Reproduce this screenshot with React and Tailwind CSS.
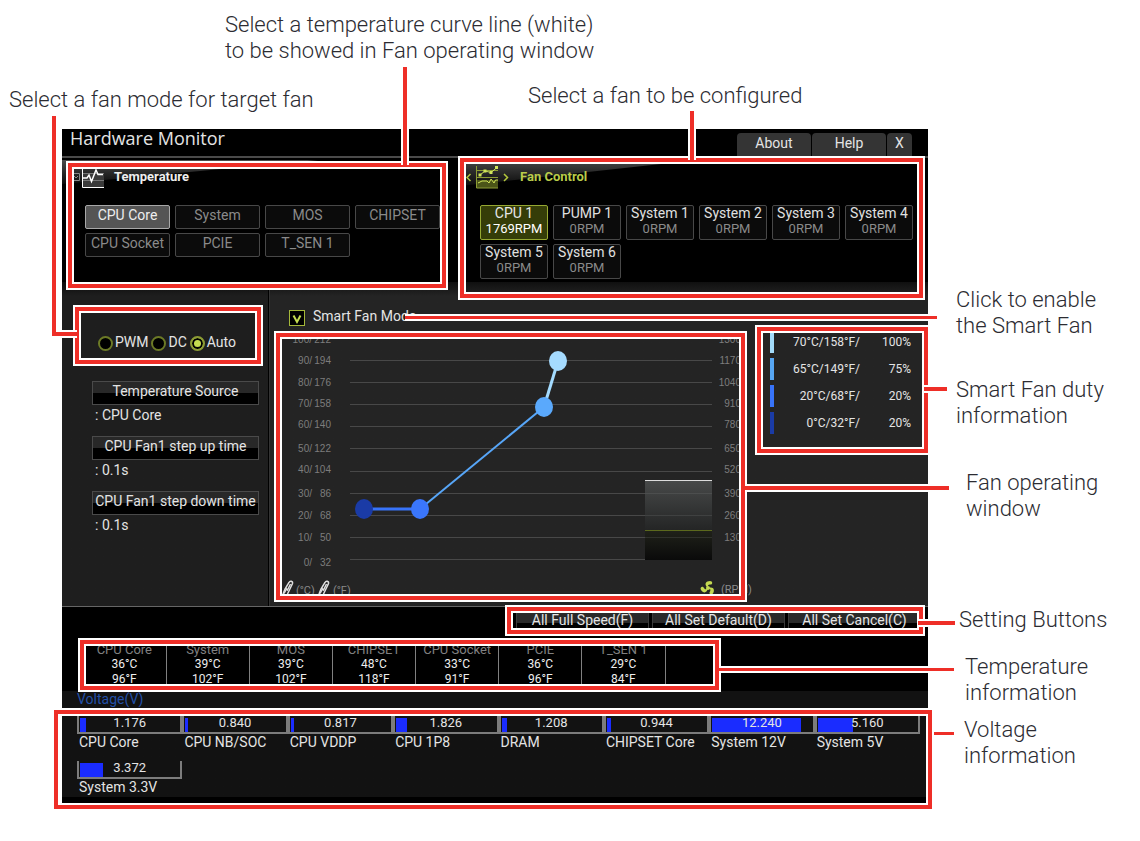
import { useState } from 'react';

const SENSORS = ['CPU Core', 'System', 'MOS', 'CHIPSET', 'CPU Socket', 'PCIE', 'T_SEN 1'];

const FANS = [
  { name: 'CPU 1', rpm: 1769 },
  { name: 'PUMP 1', rpm: 0 },
  { name: 'System 1', rpm: 0 },
  { name: 'System 2', rpm: 0 },
  { name: 'System 3', rpm: 0 },
  { name: 'System 4', rpm: 0 },
  { name: 'System 5', rpm: 0 },
  { name: 'System 6', rpm: 0 },
];

const FAN_OPTIONS = [
  { label: 'Temperature Source', value: 'CPU Core' },
  { label: 'CPU Fan1 step up time', value: '0.1s' },
  { label: 'CPU Fan1 step down time', value: '0.1s' },
];

const DUTY = [
  { temp: '70°C/158°F/', duty: '100%', bar: 'bg-[#a3dbfa]' },
  { temp: '65°C/149°F/', duty: '75%', bar: 'bg-[#57a6f2]' },
  { temp: '20°C/68°F/', duty: '20%', bar: 'bg-[#3874fa]' },
  { temp: '0°C/32°F/', duty: '20%', bar: 'bg-[#1a3ba6]' },
];

const TEMPS = [
  { name: 'CPU Core', c: 36, f: 96 },
  { name: 'System', c: 39, f: 102 },
  { name: 'MOS', c: 39, f: 102 },
  { name: 'CHIPSET', c: 48, f: 118 },
  { name: 'CPU Socket', c: 33, f: 91 },
  { name: 'PCIE', c: 36, f: 96 },
  { name: 'T_SEN 1', c: 29, f: 84 },
];

const VOLTAGES = [
  { name: 'CPU Core', value: '1.176', fill: 6 },
  { name: 'CPU NB/SOC', value: '0.840', fill: 3 },
  { name: 'CPU VDDP', value: '0.817', fill: 3 },
  { name: 'CPU 1P8', value: '1.826', fill: 11 },
  { name: 'DRAM', value: '1.208', fill: 5 },
  { name: 'CHIPSET Core', value: '0.944', fill: 4 },
  { name: 'System 12V', value: '12.240', fill: 88 },
  { name: 'System 5V', value: '5.160', fill: 35 },
  { name: 'System 3.3V', value: '3.372', fill: 23 },
];

// y is the label centre inside the chart
const AXIS = [
  { c: '100/', f: '212', rpm: '1300', y: 6 },
  { c: '90/', f: '194', rpm: '1170', y: 27 },
  { c: '80/', f: '176', rpm: '1040', y: 49 },
  { c: '70/', f: '158', rpm: '910', y: 70 },
  { c: '60/', f: '140', rpm: '780', y: 91 },
  { c: '50/', f: '122', rpm: '650', y: 115 },
  { c: '40/', f: '104', rpm: '520', y: 136 },
  { c: '30/', f: '86', rpm: '390', y: 160 },
  { c: '20/', f: '68', rpm: '260', y: 182 },
  { c: '10/', f: '50', rpm: '130', y: 204 },
  { c: '0/', f: '32', rpm: '', y: 229 },
];

const GRID_LINES = [27, 49, 71, 93, 115, 138, 160, 182, 204, 226];

const Frame = () => (
  <span aria-hidden="true" className="pointer-events-none absolute inset-0 border-4 border-[#ee2e27] shadow-[0_0_0_2px_#fff,inset_0_0_0_2px_#fff]" />
);

const Leader = ({ className }) => (
  <span aria-hidden="true" className={`pointer-events-none absolute z-20 bg-[#ee2e27] ${className}`} />
);

const Note = ({ className = '', children }) => (
  <p className={`text-[22px] leading-[26px] font-light whitespace-nowrap text-[#2c2c32] ${className}`}>{children}</p>
);

const TemperatureIcon = () => (
  <svg width="32" height="20" viewBox="0 0 32 20" fill="none" aria-hidden="true">
    <path d="M0.5 5.5h7v7h-7zM2 8l2 2 2-2" stroke="#888" />
    <path d="M11 5h21v14H11z" fill="#3a3a3a" />
    <path d="M11 5.5h21M11 12.5h21" stroke="#777" />
    <path d="M10.5 0v19.5H32" stroke="#fff" />
    <path d="M11 10h4l2-3 2.5 6.5L24 2l2 4.5h5" stroke="#fff" strokeWidth="1.5" />
  </svg>
);

const FanControlIcon = () => (
  <svg width="43" height="24" viewBox="0 0 43 24" fill="none" aria-hidden="true">
    <path d="M4.5 9L1 12.5 4.5 16M38 9l3.5 3.5L38 16" stroke="#b4c83c" strokeWidth="1.5" />
    <path d="M11 15h21v8H11z" fill="#4b5518" />
    <path d="M10.5 1v22H32M11 5.5h21M11 12.5h21" stroke="#8c9c34" />
    <path d="M14 10l5-4 6 1.5 6-5" stroke="#cfe45a" />
    <path d="M12.500 8.5h3v3h-3zM17.5 4.500h3v3h-3zM23.5 6h3v3h-3zM29 1h3v3h-3z" fill="#cfe45a" />
    <path d="M12 18l4-2h5l2 2 2-4 3 4 1.5-3H32" stroke="#cfe45a" />
  </svg>
);

const TopBar = () => (
  <header className="flex h-[29px] items-start justify-between border-b-2 border-[#4a4a4a] bg-black">
    <h1 className="pl-2 font-['Open_Sans',sans-serif] text-[18px] leading-[18px] text-[#e4e4e4]">Hardware Monitor</h1>
    <nav className="flex gap-px pt-1 pr-4 text-sm text-[#e4e4e4]">
      <button className="h-[23px] w-[74px] rounded-t bg-[#343434] pb-1 leading-4">About</button>
      <button className="h-[23px] w-[74px] rounded-t bg-[#343434] pb-1 leading-4">Help</button>
      <button className="h-[23px] w-[25px] rounded-t bg-[#343434] pb-1 leading-4">X</button>
    </nav>
  </header>
);

const TemperaturePanel = () => {
  const [active, setActive] = useState('CPU Core');
  return (
    <section className="relative mt-[5px] h-[125px] flex-[378_1_0%]">
      <div className="absolute -top-[3px] -left-[6px] h-6 w-64 bg-linear-to-b from-[#4c4c4c] to-[#0c0c0c] [clip-path:polygon(0_0,100%_0,0_100%)]" />
      <div className="relative flex h-[42px] items-start gap-[10px] pt-[5px] pl-1">
        <TemperatureIcon />
        <h2 className="text-[13px] leading-[18px] font-bold text-[#eee]">Temperature</h2>
      </div>
      <div className="relative flex flex-wrap gap-x-[5px] gap-y-1 pl-[17px]">
        {SENSORS.map((name) => (
          <button
            key={name}
            onClick={() => setActive(name)}
            className={`h-6 w-[85px] rounded-xs border pb-1 text-sm leading-4 whitespace-nowrap ${
              active === name ? 'border-[#a8a8a8] bg-[#555] text-[#eee]' : 'border-[#484848] bg-[#0b0b0b] text-[#8a8a8a]'
            }`}
          >
            {name}
          </button>
        ))}
      </div>
      <Frame />
      <Leader className="-top-24 left-[335px] h-[98px] w-1 shadow-[2px_0_0_#fff,-2px_0_0_#fff]" />
    </section>
  );
};

const FanPanel = () => {
  const [active, setActive] = useState('CPU 1');
  return (
    <section className="relative h-[140px] flex-[463_1_0%]">
      <div className="absolute top-0 left-0 h-7 w-64 bg-linear-to-b from-[#4c4c4c] to-[#0c0c0c] [clip-path:polygon(0_0,100%_0,0_100%)]" />
      <div className="relative flex h-[47px] items-start gap-[11px] pt-[7px] pl-[6px]">
        <FanControlIcon />
        <h2 className="text-[13px] leading-6 font-bold text-[#b9cc4a]">Fan Control</h2>
      </div>
      <div className="relative flex flex-wrap gap-x-[5px] gap-y-1 pl-5">
        {FANS.map((fan) => {
          const on = active === fan.name;
          return (
            <button
              key={fan.name}
              onClick={() => setActive(fan.name)}
              className={`flex h-[35px] w-[68px] flex-col items-center rounded-xs border text-sm leading-4 whitespace-nowrap ${
                on ? 'border-[#96a832] bg-[#353d08] text-[#e8e8e8]' : 'border-[#484848] bg-[#0b0b0b] text-[#e0e0e0]'
              }`}
            >
              <span className="-mt-px">{fan.name}</span>
              <span className={on ? 'text-[13px] text-white' : 'text-[13px] text-[#8a8a8a]'}>{fan.rpm}RPM</span>
            </button>
          );
        })}
      </div>
      <Frame />
      <Leader className="-top-[47px] left-[230px] h-[49px] w-1 shadow-[2px_0_0_#fff,-2px_0_0_#fff]" />
    </section>
  );
};

const FanSettings = () => {
  const [mode, setMode] = useState('Auto');
  return (
    <div className="w-[207px] shrink-0 border-r border-black bg-linear-to-b from-[#0c0c0c] to-[#1e1e1e] to-[14px] pt-[25px] pr-[7px] pl-[13px]">
      <div role="radiogroup" aria-label="Fan mode" className="relative flex h-[57px] items-start gap-[3px] pt-[27px] pl-[23px]">
        {['PWM', 'DC', 'Auto'].map((m) => (
          <label key={m} className="flex items-start gap-[2px] text-sm leading-4 text-[#e4e4e4]">
            <input
              type="radio"
              name="fan-mode"
              checked={mode === m}
              onChange={() => setMode(m)}
              className="mt-[2px] size-[15px] appearance-none rounded-full border-2 border-[#6c7a26] bg-black checked:border-[#8c9c34] checked:bg-[#c4dc50] checked:shadow-[inset_0_0_0_2px_#000]"
            />
            {m}
          </label>
        ))}
        <Frame />
        <Leader className="bottom-[28px] -left-[23px] h-[220px] w-1" />
        <Leader className="bottom-[28px] -left-[19px] h-1 w-[21px] shadow-[0_2px_0_#fff,0_-2px_0_#fff]" />
      </div>
      <div className="flex flex-col gap-[11px] pt-[17px] pr-[2px] pl-[17px] text-sm text-[#e4e4e4]">
        {FAN_OPTIONS.map((o) => (
          <div key={o.label}>
            <button className="block h-6 w-full border border-[#4a4a4a] bg-linear-to-b from-[#282828] from-50% to-black to-50% pb-1 leading-4 whitespace-nowrap">
              {o.label}
            </button>
            <p className="pl-[3px] leading-5">: {o.value}</p>
          </div>
        ))}
      </div>
    </div>
  );
};

const Thermometer = ({ x }) => (
  <g transform={`translate(${x} 247)`} fill="none" stroke="#e0e0e0">
    <path d="M1 14L3 9 7 2.5C8 0.5 11 1 10.5 3.5L5.500 14" strokeWidth="1.5" />
    <path d="M2 13.5L4.500 9l1 1L8.500 4" strokeWidth="1.5" />
  </g>
);

const FanChart = () => (
  <svg className="block h-[267px] w-full overflow-visible" viewBox="0 0 469 267" role="img" aria-label="Fan curve">
    <defs>
      <linearGradient id="upper" x1="0" y1="0" x2="0" y2="1">
        <stop offset="0" stopColor="#484a4a" />
        <stop offset="1" stopColor="#242525" />
      </linearGradient>
      <linearGradient id="lower" x1="0" y1="0" x2="0" y2="1">
        <stop offset="0" stopColor="#20221a" />
        <stop offset="1" stopColor="#0a0a0a" />
      </linearGradient>
    </defs>
    {GRID_LINES.map((y) => (
      <line key={y} x1="74" x2="436" y1={y + 0.5} y2={y + 0.5} stroke="#484848" />
    ))}
    <rect x="369" y="147" width="67" height="50" fill="url(#upper)" />
    <rect x="369" y="197" width="67" height="30" fill="url(#lower)" />
    <path d="M369 160.5h67M369 182.5h67M369 204.5h67" stroke="#888" strokeOpacity="0.2" />
    <line x1="369" x2="436" y1="147.5" y2="147.5" stroke="#ddd" />
    <line x1="369" x2="436" y1="197.5" y2="197.5" stroke="#5c691d" />

    <g fill="#7d7d7d" fontSize="10" textAnchor="end" className="font-['Liberation_Sans',sans-serif]">
      {AXIS.map((a) => (
        <g key={a.y}>
          <text x="36" y={a.y + 4}>{a.c}</text>
          <text x="55" y={a.y + 4}>{a.f}</text>
          <text x="465" y={a.y + 4}>{a.rpm}</text>
        </g>
      ))}
    </g>

    <g strokeWidth="3">
      <path d="M88 176h56" stroke="#3874fa" />
      <path d="M144 176L268 74" stroke="#57a6f8" strokeWidth="2" />
      <path d="M268 74L282 28" stroke="#a3dbff" />
    </g>
    <ellipse cx="88" cy="176" rx="9" ry="10" fill="#1a3ba6" />
    <ellipse cx="144" cy="176" rx="9" ry="10" fill="#3a76fc" />
    <ellipse cx="268" cy="74" rx="9" ry="10" fill="#5aa9fc" />
    <ellipse cx="282" cy="28" rx="9" ry="10" fill="#a5dbff" />

    <Thermometer x={6} />
    <Thermometer x={42} />
    <g fill="#8a8a8a" fontSize="11">
      <text x="20" y="261">(°C)</text>
      <text x="57" y="261">(°F)</text>
      <text x="445" y="260">(RPM)</text>
    </g>
    <g transform="translate(432 255)" fill="#c4d951">
      <circle r="2" />
      <path d="M-1 -1c-3-3-1-6 3-6 3 0 3 4 0 3.5C0-3.5-0.5-2 0-1z" />
      <path d="M-1 -1c-3-3-1-6 3-6 3 0 3 4 0 3.5C0-3.5-0.5-2 0-1z" transform="rotate(120)" />
      <path d="M-1 -1c-3-3-1-6 3-6 3 0 3 4 0 3.5C0-3.5-0.5-2 0-1z" transform="rotate(240)" />
    </g>
  </svg>
);

const SmartFan = () => {
  const [smart, setSmart] = useState(true);
  return (
    <div className="flex flex-1 items-start gap-3 border-l border-[#333] bg-linear-to-b from-[#101010] to-[#242424] to-[14px] pl-[6px]">
      <div className="min-w-0 flex-1">
        <div className="relative flex h-[51px] items-start pt-[26px] pl-[13px]">
          <label className="flex items-start gap-2 text-sm leading-4 text-[#e4e4e4]">
            <span className="relative mt-[2px] size-4">
              <input
                type="checkbox"
                checked={smart}
                onChange={(e) => setSmart(e.target.checked)}
                className="peer block size-4 appearance-none border border-[#a5b83a] bg-black"
              />
              <svg viewBox="0 0 16 16" fill="none" className="pointer-events-none absolute inset-0 hidden peer-checked:block">
                <path d="M4.5 5.5L8 12l3.5-6.5" stroke="#c4dc50" strokeWidth="2" />
              </svg>
            </span>
            Smart Fan Mode
          </label>
          <Leader className="top-[34px] -right-[192px] left-[129px] h-[3px] shadow-[0_2px_0_#fff,0_-2px_0_#fff]" />
        </div>
        <div className="relative">
          <FanChart />
          <Frame />
          <Leader className="top-[153px] -right-[204px] h-1 w-[204px] shadow-[0_2px_0_#fff,0_-2px_0_#fff]" />
        </div>
      </div>
      <div className="relative mt-[45px] h-[126px] w-[171px] pt-px pr-[17px] pl-[13px]">
        <table className="w-full text-right text-xs text-[#e4e4e4]">
          <tbody>
            {DUTY.map((row) => (
              <tr key={row.temp} className="h-[27px]">
                <td className="w-1"><span className={`block h-[22px] w-1 ${row.bar}`} /></td>
                <td>{row.temp}</td>
                <td className="w-[51px]">{row.duty}</td>
              </tr>
            ))}
          </tbody>
        </table>
        <Frame />
        <Leader className="top-[60px] -right-[19px] h-1 w-[23px] shadow-[0_2px_0_#fff,0_-2px_0_#fff]" />
      </div>
    </div>
  );
};

const SettingButtons = () => (
  <div className="relative mr-[5px] flex h-[27px] w-[416px] gap-[3px] self-end pr-[2px] pl-[9px] text-sm text-[#e4e4e4]">
    {['All Full Speed(F)', 'All Set Default(D)', 'All Set Cancel(C)'].map((label) => (
      <button key={label} className="h-[27px] flex-1 border-x border-[#3c3c3c] bg-linear-to-b from-[#2a2a2a] from-60% to-black to-60% pb-px leading-4">
        {label}
      </button>
    ))}
    <Frame />
    <Leader className="top-[14px] -right-[32px] h-1 w-[37px] shadow-[0_2px_0_#fff,0_-2px_0_#fff]" />
  </div>
);

const TemperatureInfo = () => (
  <div className="relative mt-[6px] mr-[209px] mb-px ml-[18px] h-[50px] pt-[2px] pl-[3px]">
    <table className="w-full table-fixed text-center text-xs text-[#eee]">
      <thead>
        <tr className="h-[15px] text-[13px] leading-[15px] text-[#808080]">
          {TEMPS.map((t) => (
            <th key={t.name} className="border-r border-[#808080] font-normal whitespace-nowrap">{t.name}</th>
          ))}
          <td className="w-[54px]" />
        </tr>
      </thead>
      <tbody>
        <tr className="h-[14px] leading-[14px]">
          {TEMPS.map((t) => (
            <td key={t.name} className="border-r border-[#808080]">{t.c}°C</td>
          ))}
          <td />
        </tr>
        <tr className="h-4 leading-4">
          {TEMPS.map((t) => (
            <td key={t.name} className="border-r border-[#808080]">{t.f}°F</td>
          ))}
          <td />
        </tr>
      </tbody>
    </table>
    <Frame />
    <Leader className="top-7 -right-[235px] h-[3px] w-[235px] shadow-[0_2px_0_#fff,0_-2px_0_#fff]" />
  </div>
);

const VoltageInfo = () => (
  <div className="bg-linear-to-b from-[#121212] from-[106px] to-black to-[106px]">
    <h2 className="h-[19px] pl-[15px] text-sm leading-4 text-[#2350a8]">Voltage(V)</h2>
    <div className="relative -mr-1 -mb-[5px] -ml-2 h-[99px] pt-[6px] pr-3 pl-[23px]">
      <ul className="grid grid-cols-8 gap-y-[11px] text-[#e4e4e4]">
        {VOLTAGES.map((v) => (
          <li key={v.name}>
            <div className="relative h-[18px] border-2 border-t-0 border-[#7c7c7c] pt-[2px] pl-px">
              <div className="h-[14px] bg-[#1a2cff]" style={{ width: `${v.fill}%` }} />
              <span className="absolute inset-0 text-center text-[13px] leading-[14px]">{v.value}</span>
            </div>
            <p className="pl-[2px] text-sm leading-4 whitespace-nowrap">{v.name}</p>
          </li>
        ))}
      </ul>
      <Frame />
      <Leader className="top-[22px] -right-[22px] h-[3px] w-5" />
    </div>
  </div>
);

const App = () => {
  return (
    <div className="min-h-screen min-w-[1140px] bg-white pb-8 font-['Roboto','Liberation_Sans',sans-serif]">
      <div className="h-[129px] pt-3">
        <Note className="pl-[225px]">
          Select a temperature curve line (white)
          <br />
          to be showed in Fan operating window
        </Note>
        <div className="flex pt-[19px] pl-[9px]">
          <Note className="w-[519px] pt-1">Select a fan mode for target fan</Note>
          <Note>Select a fan to be configured</Note>
        </div>
      </div>

      <div className="flex items-start pl-[62px]">
        <main className="flex min-w-0 flex-1 flex-col bg-black">
          <TopBar />
          <div className="relative z-20 -mb-[16px] flex items-start gap-[14px] pr-[5px] pl-[6px]">
            <TemperaturePanel />
            <FanPanel />
          </div>
          <div className="relative z-10 flex h-[325px] border-b border-[#666]">
            <FanSettings />
            <SmartFan />
          </div>
          <div className="relative z-10 flex flex-col">
            <SettingButtons />
            <TemperatureInfo />
          </div>
          <VoltageInfo />
        </main>

        <aside className="w-[212px] shrink-0 pt-[158px] pl-7">
          <Note>Click to enable<br />the Smart Fan</Note>
          <Note className="mt-[38px]">Smart Fan duty<br />information</Note>
          <Note className="mt-[41px] pl-[10px]">Fan operating<br />window</Note>
          <Note className="mt-[85px] pl-[3px]">Setting Buttons</Note>
          <Note className="mt-[21px] pl-[9px]">Temperature<br />information</Note>
          <Note className="mt-[11px] pl-[8px]">Voltage<br />information</Note>
        </aside>
      </div>
    </div>
  );
};

export default App;
